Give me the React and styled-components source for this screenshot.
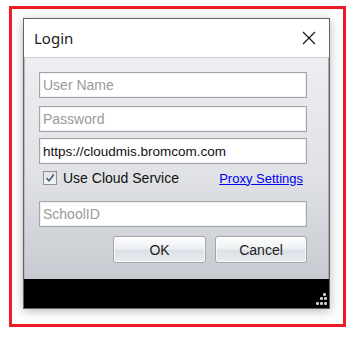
import React from 'react'
import styled, { createGlobalStyle } from 'styled-components'

const GlobalStyle = createGlobalStyle`
  html, body {
    margin: 0;
    padding: 0;
    background: #ffffff;
  }
`

const Page = styled.div`
  width: 353px;
  height: 337px;
  padding: 6px 0 0 9px;
  box-sizing: border-box;
`

const Frame = styled.div`
  width: 337px;
  height: 321px;
  box-sizing: border-box;
  border: 3px solid #ed1c24;
  padding: 9px 0 0 11px;
  background: #ffffff;
`

const Window = styled.div`
  display: flex;
  flex-direction: column;

  width: 307px;
  height: 291px;
  box-sizing: border-box;
  border: 1px solid #5f6266;
  box-shadow: 0 2px 10px rgba(0, 0, 0, 0.28);
  background: #ffffff;
  font-family: "Liberation Sans", Arial, sans-serif;
`

const TitleBar = styled.div`
  display: flex;
  align-items: center;
  justify-content: space-between;

  height: 38px;
  padding: 0 13px 0 10px;
  background: #ffffff;
`

const Title = styled.span`
  color: #1b1b1b;
  font-family: "Noto Sans", "Liberation Sans", sans-serif;
  font-size: 15px;
`

const CloseButton = styled.span`
  display: flex;
  width: 14px;
  height: 14px;
`

const Body = styled.div`
  flex: 1;
  display: flex;
  flex-direction: column;

  padding: 14px 21px 0 14px;
  border-top: 1px solid #cfd1d5;
  border-left: 1px solid #b9bbbf;
  border-right: 1px solid #a8aaae;
  background: linear-gradient(#eceef1, #dfe1e5 55%, #c7cad0);
`

const Field = styled.div`
  height: 26px;
  box-sizing: border-box;
  margin-top: ${props => props.gap || 0}px;
  padding: 0 3px;
  border: 1px solid #a3a5a9;
  box-shadow: inset 0 0 0 1px #eef0f2;
  background: #ffffff;

  display: flex;
  align-items: center;

  color: ${props => (props.filled ? '#111111' : '#9a9a9a')};
  font-size: ${props => (props.filled ? 13.5 : 14)}px;
  white-space: nowrap;
`

const OptionRow = styled.div`
  display: flex;
  align-items: center;
  justify-content: space-between;

  height: 22px;
  margin: 3px 4px 12px 4px;
`

const CheckLabel = styled.label`
  display: flex;
  align-items: center;
  gap: 6px;

  color: #111111;
  font-size: 14px;
`

const CheckBox = styled.span`
  display: flex;
  align-items: center;
  justify-content: center;

  width: 14px;
  height: 14px;
  box-sizing: border-box;
  border: 1px solid #8e9196;
  background: linear-gradient(#dfe1e4, #f4f5f6);
`

const ProxyLink = styled.a`
  color: #0000ee;
  font-size: 13px;
  text-decoration: underline;
  cursor: pointer;
`

const Buttons = styled.div`
  display: flex;
  justify-content: flex-end;
  gap: 9px;

  margin-top: 9px;
`

const Button = styled.button`
  width: ${props => props.width}px;
  height: 27px;
  box-sizing: border-box;
  border: 1px solid #a4a6aa;
  border-radius: 3px;
  background: linear-gradient(#fdfdfd, #eef1f4 45%, #dbe1e8 55%, #e9ecef);
  box-shadow: inset 0 0 0 1px rgba(255, 255, 255, 0.7);

  color: #1d1d1d;
  font-family: "Liberation Sans", Arial, sans-serif;
  font-size: 14px;
`

const Footer = styled.div`
  display: flex;
  justify-content: flex-end;
  align-items: flex-end;

  height: 27px;
  padding: 0 2px 2px 0;
  background: #000000;
`

const Grip = () => (
  <svg width="14" height="14" viewBox="0 0 14 14">
    {[
      [10, 1],
      [7, 5], [11, 5],
      [3, 10], [7, 10], [11, 10]
    ].map(([x, y]) => (
      <rect key={`${x}-${y}`} x={x} y={y} width="3" height="3" rx="1" fill="#c9cbce" />
    ))}
  </svg>
)

const App = () => (
  <Page>
    <GlobalStyle />
    <Frame>
      <Window>
        <TitleBar>
          <Title>Login</Title>
          <CloseButton>
            <svg width="14" height="14" viewBox="0 0 14 14">
              <path d="M1 1 L13 13 M13 1 L1 13" stroke="#111111" strokeWidth="1.1" />
            </svg>
          </CloseButton>
        </TitleBar>
        <Body>
          <Field>User Name</Field>
          <Field gap={8}>Password</Field>
          <Field gap={6} filled>https://cloudmis.bromcom.com</Field>
          <OptionRow>
            <CheckLabel>
              <CheckBox>
                <svg width="10" height="10" viewBox="0 0 10 10">
                  <path d="M1.5 5 L4 7.8 L8.8 1.5" stroke="#4a5a78" strokeWidth="1.6" fill="none" />
                </svg>
              </CheckBox>
              Use Cloud Service
            </CheckLabel>
            <ProxyLink>Proxy Settings</ProxyLink>
          </OptionRow>
          <Field>SchoolID</Field>
          <Buttons>
            <Button width={93}>OK</Button>
            <Button width={92}>Cancel</Button>
          </Buttons>
        </Body>
        <Footer>
          <Grip />
        </Footer>
      </Window>
    </Frame>
  </Page>
)

export default App
